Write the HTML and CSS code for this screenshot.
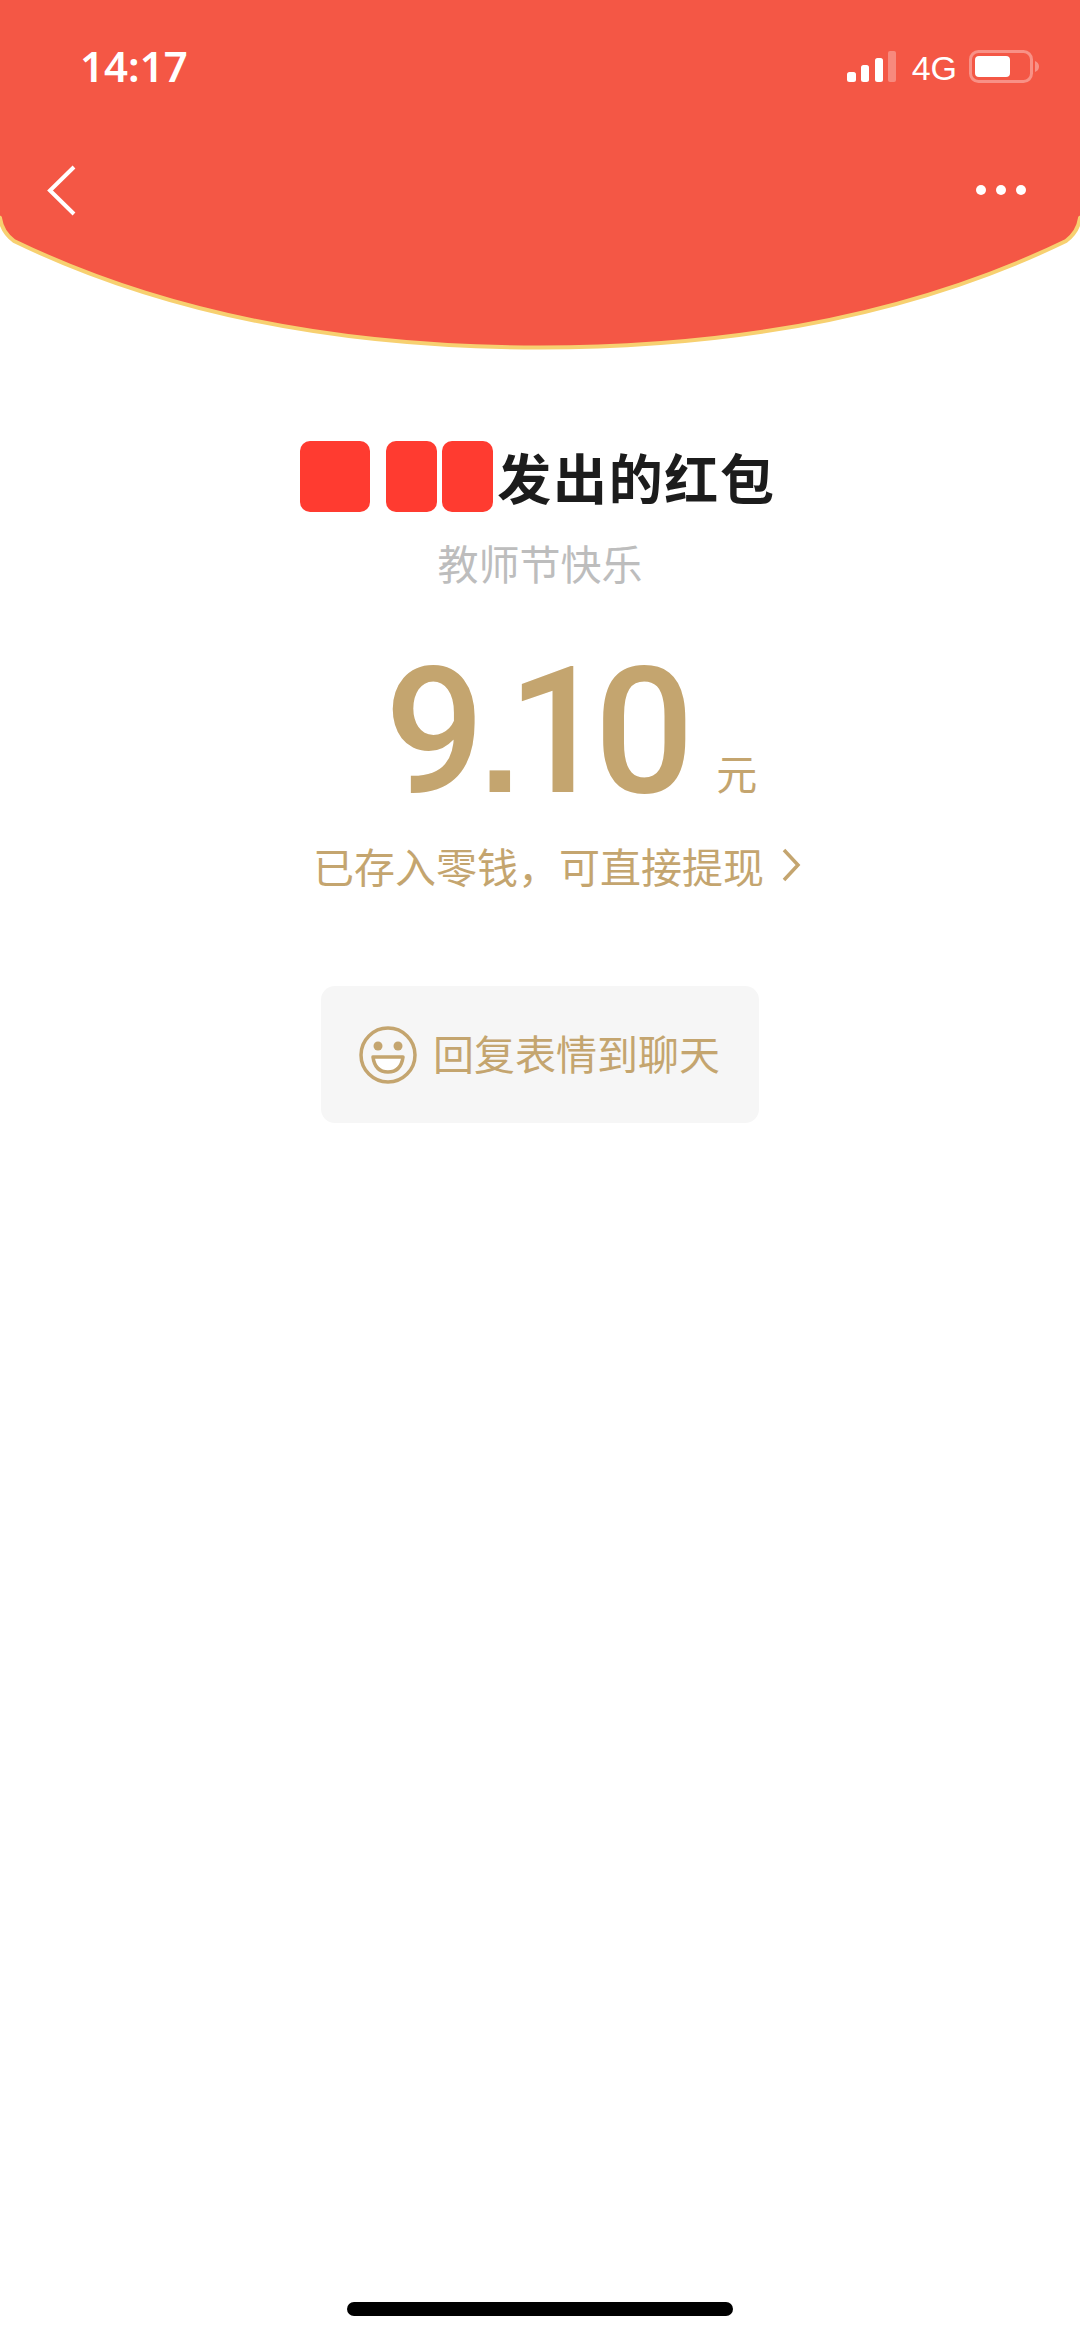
FILE: index.html
```html
<!DOCTYPE html>
<html lang="zh-CN">
<head>
<meta charset="utf-8">
<title>红包详情</title>
<link rel="stylesheet" href="styles.css">
</head>
<body>
<div class="page">
  <header class="header">
    <svg class="header-bg" width="1080" height="352" viewBox="0 0 1080 352">
      <path d="M-6 -6H1086V214L1080 218Q1078 232 1066 241Q846 347.500 540 347.500Q234 347.500 14 241Q2 232 0 218L-6 214Z" fill="#f45745" stroke="#f7d070" stroke-width="4"/>
    </svg>
    <div class="status">
      <span class="time">14:17</span>
      <div class="status-right">
        <svg class="signal" width="49" height="31" viewBox="0 0 49 31">
          <rect x="0" y="21" width="9" height="10" rx="2.500" fill="#fff"/>
          <rect x="14" y="14" width="8" height="17" rx="2.500" fill="#fff"/>
          <rect x="28" y="7" width="8" height="24" rx="2.500" fill="#fff"/>
          <rect x="41" y="0" width="8" height="31" rx="2" fill="#fff" fill-opacity=".3"/>
        </svg>
        <span class="net">4G</span>
        <svg class="battery" width="70" height="33" viewBox="0 0 70 33">
          <rect x="1.500" y="1.500" width="61" height="30" rx="8" fill="none" stroke="#fff" stroke-opacity=".35" stroke-width="3"/>
          <rect x="6" y="6" width="35" height="21" rx="4" fill="#fff"/>
          <path d="M66 11Q70 12.500 70 16.500Q70 20.500 66 22Z" fill="#fff" fill-opacity=".35"/>
        </svg>
      </div>
    </div>
    <nav class="nav">
      <svg width="30" height="52" viewBox="0 0 30 52"><path d="M27 3L3 26.500L27 50" fill="none" stroke="#fff" stroke-width="4"/></svg>
      <svg width="52" height="12" viewBox="0 0 52 12"><circle cx="6" cy="6" r="5" fill="#fff"/><circle cx="26" cy="6" r="5" fill="#fff"/><circle cx="46" cy="6" r="5" fill="#fff"/></svg>
    </nav>
  </header>
  <main class="main">
    <h1 class="title">
      <span class="mask mask-wide"></span><span class="mask mask-gap"></span><span class="mask mask-end"></span><span>发出的红包</span>
    </h1>
    <p class="wish">教师节快乐</p>
    <div class="amount"><span class="value">9<span class="dot">.</span>10</span><span class="unit">元</span></div>
    <div class="link">
      <span>已存入零钱，可直接提现</span>
      <svg width="20" height="34" viewBox="0 0 20 34"><path d="M3 2L17 17L3 32" fill="none" stroke="#c4a56f" stroke-width="3.500"/></svg>
    </div>
    <div class="reply">
      <svg width="58" height="58" viewBox="0 0 58 58">
        <circle cx="29" cy="29" r="27" fill="none" stroke="#c4a56f" stroke-width="3.500"/>
        <circle cx="19" cy="20" r="4.500" fill="#c4a56f"/>
        <circle cx="39" cy="20" r="4.500" fill="#c4a56f"/>
        <path d="M14 31H44Q42 46 29 46Q16 46 14 31Z" fill="#fff" stroke="#c4a56f" stroke-width="3.500" stroke-linejoin="round"/>
      </svg>
      <span class="reply-text">回复表情到聊天</span>
    </div>
  </main>
  <div class="home-bar"></div>
</div>
</body>
</html>
```
FILE: styles.css
```css
* { box-sizing: border-box; }
html, body { margin: 0; padding: 0; background: #fff; }
.page {
  width: 1080px;
  height: 2339px;
  display: flex;
  flex-direction: column;
  overflow: hidden;
  font-family: "Noto Sans CJK SC", "Noto Sans", sans-serif;
}
.header { position: relative; height: 350px; flex: none; }
.header-bg { position: absolute; left: 0; top: 0; }
.status, .nav { position: relative; }
.status {
  height: 132px;
  padding: 43px 41px 0 80px;
  display: flex;
  justify-content: space-between;
  align-items: flex-start;
  color: #fff;
}
.time {
  font-family: "Noto Sans", sans-serif;
  font-weight: 600;
  font-size: 42px;
  line-height: 46px;
  height: 46px;
}
.status-right { display: flex; align-items: flex-start; padding-top: 7px; }
.signal { margin-top: 1px; }
.net {
  font-family: "Liberation Sans", sans-serif;
  font-size: 34px;
  line-height: 36px;
  margin: 0 12px 0 16px;
}
.nav {
  padding: 32px 53px 0 47px;
  display: flex;
  justify-content: space-between;
  align-items: center;
}
.main {
  flex: 1;
  display: flex;
  flex-direction: column;
  align-items: center;
}
.title {
  margin: 91px 0 0;
  height: 71px;
  display: flex;
  align-items: center;
  font-size: 54px;
  font-weight: 700;
  letter-spacing: 1.700px;
  color: #1c1c1c;
  line-height: 69px;
  transform: translateX(-2px);
}
.mask { height: 71px; background: #ff3b30; border-radius: 10px; }
.mask-wide { width: 70px; margin-right: 16px; }
.mask-gap { width: 51px; margin-right: 5px; }
.mask-end { width: 51px; margin-right: 4px; }
.wish {
  margin: 25px 0 0;
  font-size: 41px;
  line-height: 50px;
  color: #bdbdbd;
}
.amount {
  margin: 75px 0 0;
  padding-left: 62px;
  height: 160px;
  display: flex;
  align-items: flex-end;
  color: #c4a56f;
}
.value {
  font-family: Roboto, sans-serif;
  font-weight: 500;
  font-size: 176px;
  line-height: 160px;
  letter-spacing: -13px;
}
.dot {
  font-family: "Liberation Sans", sans-serif;
  font-weight: 700;
  font-size: 145px;
  margin-left: 8px;
  margin-right: 0;
}
.unit { font-size: 41px; line-height: 48px; margin-left: 35px; margin-bottom: 26px; }
.link {
  margin: 17px 0 0;
  padding-left: 34px;
  display: flex;
  align-items: center;
  gap: 17px;
  font-size: 41px;
  line-height: 52px;
  color: #c4a56f;
}
.reply {
  margin: 95px 0 0;
  width: 438px;
  height: 137px;
  border-radius: 14px;
  background: #f6f6f6;
  display: flex;
  align-items: center;
  gap: 16px;
  padding-left: 38px;
  font-size: 41px;
  color: #c4a56f;
}
.reply-text { padding-bottom: 5px; }
.home-bar {
  flex: none;
  width: 386px;
  height: 14px;
  margin: 0 auto 23px;
  border-radius: 7px;
  background: #000;
}
```
